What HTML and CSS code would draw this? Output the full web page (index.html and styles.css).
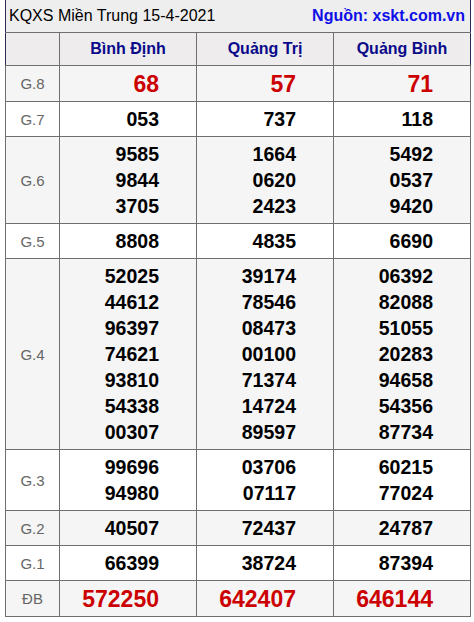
FILE: index.html
```html
<!DOCTYPE html>
<html lang="vi">
<head>
<meta charset="utf-8">
<link rel="stylesheet" href="styles.css">
<title>KQXS Miền Trung 15-4-2021</title>
</head>
<body>
<table class="kq">
  <colgroup>
    <col class="c-label">
    <col class="c-prov">
    <col class="c-prov">
    <col class="c-prov">
  </colgroup>
  <thead>
    <tr class="title-row">
      <th colspan="4">
        <div class="title-bar">
          <span class="title">KQXS Miền Trung 15-4-2021</span>
          <span class="source">Nguồn: xskt.com.vn</span>
        </div>
      </th>
    </tr>
    <tr class="head-row">
      <th class="label"></th>
      <th class="prov">Bình Định</th>
      <th class="prov">Quảng Trị</th>
      <th class="prov">Quảng Bình</th>
    </tr>
  </thead>
  <tbody>
    <tr class="alt big">
      <td class="label">G.8</td>
      <td class="num red">68</td>
      <td class="num red">57</td>
      <td class="num red">71</td>
    </tr>
    <tr>
      <td class="label">G.7</td>
      <td class="num">053</td>
      <td class="num">737</td>
      <td class="num">118</td>
    </tr>
    <tr class="alt">
      <td class="label">G.6</td>
      <td class="num">9585<br>9844<br>3705</td>
      <td class="num">1664<br>0620<br>2423</td>
      <td class="num">5492<br>0537<br>9420</td>
    </tr>
    <tr>
      <td class="label">G.5</td>
      <td class="num">8808</td>
      <td class="num">4835</td>
      <td class="num">6690</td>
    </tr>
    <tr class="alt">
      <td class="label">G.4</td>
      <td class="num">52025<br>44612<br>96397<br>74621<br>93810<br>54338<br>00307</td>
      <td class="num">39174<br>78546<br>08473<br>00100<br>71374<br>14724<br>89597</td>
      <td class="num">06392<br>82088<br>51055<br>20283<br>94658<br>54356<br>87734</td>
    </tr>
    <tr>
      <td class="label">G.3</td>
      <td class="num">99696<br>94980</td>
      <td class="num">03706<br>07117</td>
      <td class="num">60215<br>77024</td>
    </tr>
    <tr class="alt">
      <td class="label">G.2</td>
      <td class="num">40507</td>
      <td class="num">72437</td>
      <td class="num">24787</td>
    </tr>
    <tr>
      <td class="label">G.1</td>
      <td class="num">66399</td>
      <td class="num">38724</td>
      <td class="num">87394</td>
    </tr>
    <tr class="alt big">
      <td class="label">ĐB</td>
      <td class="num red">572250</td>
      <td class="num red">642407</td>
      <td class="num red">646144</td>
    </tr>
  </tbody>
</table>
</body>
</html>
```
FILE: styles.css
```css
html, body {
  background: #ffffff;
}
body {
  margin: 0 0 0 5px;
  font-family: "Liberation Sans", Arial, sans-serif;
}
.kq {
  width: 464px;
  table-layout: fixed;
  border-collapse: collapse;
  border: 1px solid #6f6f6f;
  border-top: none;
}
.c-label { width: 54px; }
.c-prov { width: 137px; }

.kq th, .kq td {
  border: 1px solid #6f6f6f;
  padding: 0;
}
.title-row th {
  background: #eeeeee;
  border-top: none;
  border-left-color: #2a2a55;
  border-right-color: #2a2a55;
  height: 32px;
  padding: 0 5px 0 3px;
}
.title-bar {
  display: flex;
  justify-content: space-between;
  align-items: center;
  font-weight: normal;
}
.title {
  color: #000000;
  font-size: 16px;
}
.source {
  color: #0f0fe8;
  font-size: 16px;
  font-weight: bold;
}
.head-row th {
  background: #eeecec;
  height: 32px;
}
.head-row th:first-child { border-left-color: #2a2a55; }
.head-row th:last-child { border-right-color: #2a2a55; }
.prov {
  color: #0a0a8a;
  font-size: 16px;
  font-weight: bold;
  text-align: center;
}
.alt td { background: #f5f5f5; }
.label {
  color: #666666;
  font-size: 15px;
  text-align: center;
  vertical-align: middle;
}
.num {
  text-align: right;
  padding: 4px 37px 4px 0 !important;
  font-weight: bold;
  font-size: 19.5px;
  line-height: 26px;
  color: #000000;
}
.big .num { padding: 5px 37px 4px 0 !important; }
.num.red {
  color: #cc0000;
  font-size: 23px;
}
```
